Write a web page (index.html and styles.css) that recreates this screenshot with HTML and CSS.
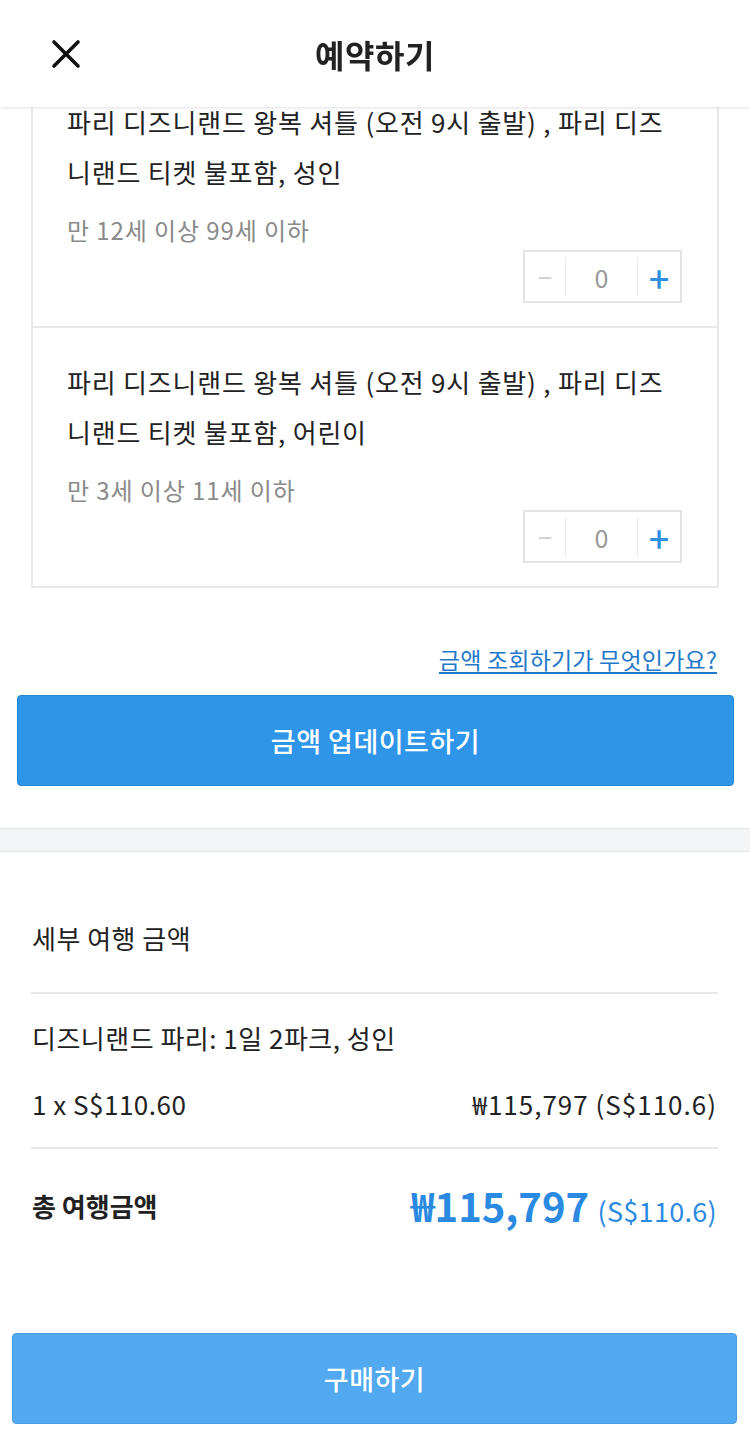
FILE: index.html
```html
<!DOCTYPE HTML>
<html>
<head>
	<meta charset="utf-8" />
	<title>예약하기</title>
	<link rel="stylesheet" href="styles.css">
</head>
<body>

<div id="header">
	<span class="close">
		<svg width="30" height="30" viewBox="0 0 30 30"><path d="M3 3 L27 27 M27 3 L3 27" stroke="#111" stroke-width="3.6" stroke-linecap="round" fill="none"/></svg>
	</span>
	<h1>예약하기</h1>
</div>

<div id="main">

<div class="options">
	<div class="option">
		<p class="opt-title">파리 디즈니랜드 왕복 셔틀 (오전 9시 출발) , 파리 디즈니랜드 티켓 불포함, 성인</p>
		<p class="opt-age">만 12세 이상 99세 이하</p>
		<div class="stepper">
			<span class="minus">−</span>
			<span class="count">0</span>
			<span class="plus">+</span>
		</div>
	</div>
	<div class="option">
		<p class="opt-title">파리 디즈니랜드 왕복 셔틀 (오전 9시 출발) , 파리 디즈니랜드 티켓 불포함, 어린이</p>
		<p class="opt-age">만 3세 이상 11세 이하</p>
		<div class="stepper">
			<span class="minus">−</span>
			<span class="count">0</span>
			<span class="plus">+</span>
		</div>
	</div>
</div>

<div class="help"><a href="#">금액 조회하기가 무엇인가요?</a></div>

<button class="btn update">금액 업데이트하기</button>

</div>

<div class="band"></div>

<div id="summary">
	<p class="sum-title">세부 여행 금액</p>
	<div class="sum-detail">
		<p class="sum-name">디즈니랜드 파리: 1일 2파크, 성인</p>
		<div class="sum-row">
			<span>1 x S$110.60</span>
			<span>₩115,797 (S$110.6)</span>
		</div>
	</div>
	<div class="sum-total">
		<span class="total-label">총 여행금액</span>
		<span class="total-price"><b>₩115,797</b> (S$110.6)</span>
	</div>
</div>

<div id="footer">
	<button class="btn buy">구매하기</button>
</div>

</body>
</html>
```

FILE: styles.css
```css
body {
	margin: 0;
	background: #fff;
	color: #222;
	font-family: "Noto Sans CJK KR", sans-serif;
}

p {margin: 0;}

#header {
	position: fixed;
	top: 0;
	left: 0;
	right: 0;
	height: 107px;
	background: #fff;
	box-shadow: 0 1px 3px rgba(0,0,0,0.12);
	display: flex;
	align-items: center;
	justify-content: center;
	z-index: 2;
}

#header h1 {
	margin: 0;
	font-size: 32px;
	font-weight: 700;
	letter-spacing: 0.5px;
}

.close {
	position: absolute;
	left: 51px;
	top: 39px;
	width: 30px;
	height: 30px;
}

#main {
	padding: 66px 16px 0 17px;
}

.options {
	margin: 0 15px 0 14px;
	border: 2px solid #e6e8ea;
}

.option {
	padding: 29px 35px 23px 34px;
	border-top: 2px solid #e6e8ea;
	display: flex;
	flex-direction: column;
}

.option:first-child {border-top: 0;}

.opt-title {
	font-size: 26px;
	line-height: 50px;
	letter-spacing: 0.8px;
}

.opt-age {
	margin-top: 16px;
	font-size: 24px;
	line-height: 34px;
	letter-spacing: 0.9px;
	color: #8a8a8a;
}

.stepper {
	align-self: flex-end;
	margin-top: 3px;
	width: 159px;
	height: 53px;
	box-sizing: border-box;
	border: 2px solid #e4e4e4;
	display: flex;
	align-items: center;
}

.stepper span {
	display: flex;
	align-items: center;
	justify-content: center;
	height: 38px;
}

.minus {
	width: 40px;
	color: #d0d0d0;
	font-size: 26px;
	border-right: 1.5px solid #eaeaea;
}

.count {
	flex: 1;
	color: #999;
	font-size: 25px;
	border-right: 1.5px solid #eaeaea;
}

.plus {
	width: 42px;
	color: #2f8fe0;
	font-size: 36px;
	font-weight: 500;
}

.help {
	text-align: right;
	margin: 56px 17px 0 0;
	font-size: 23px;
	line-height: 30px;
	letter-spacing: 0.2px;
}

.help a {
	color: #1f78c9;
	text-decoration: underline;
	text-underline-offset: 3px;
}

.btn {
	display: block;
	width: 100%;
	height: 91px;
	border-radius: 4px;
	color: #fff;
	font-family: "Noto Sans CJK KR", sans-serif;
	font-size: 27px;
	font-weight: 500;
	letter-spacing: 0.5px;
	cursor: pointer;
}

.update {
	margin-top: 21px;
	background: #2e95e9;
	border: 1px solid #2785d4;
}

.band {
	margin-top: 42px;
	height: 22px;
	background: #f4f5f7;
	border-top: 1px solid #e3e5e8;
	border-bottom: 1px solid #e3e5e8;
}

#summary {
	padding: 0 32px 0 31px;
	letter-spacing: 0.5px;
}

.sum-title {
	padding: 66px 1px 0;
	height: 74px;
	font-size: 26px;
	line-height: 40px;
	border-bottom: 2px solid #e6e8ea;
}

.sum-detail {
	padding: 24px 1px 23px;
	border-bottom: 2px solid #e6e8ea;
}

.sum-name {
	font-size: 26px;
	line-height: 40px;
}

.sum-row {
	margin-top: 26px;
	display: flex;
	justify-content: space-between;
	font-size: 26px;
	line-height: 40px;
}

.sum-row span:last-child {letter-spacing: 1px;}

.sum-total {
	padding: 27px 1px 0;
	display: flex;
	justify-content: space-between;
	align-items: center;
}

.total-label {
	font-size: 26px;
	font-weight: 700;
	letter-spacing: 0;
}

.total-price {
	color: #2a8ae2;
	font-size: 27px;
	letter-spacing: 0.3px;
}

.total-price b {
	font-size: 40px;
	font-weight: 700;
	letter-spacing: 0;
	margin-right: 2px;
}

#footer {
	padding: 99px 13px 0 12px;
}

.buy {
	background: #52a9f0;
	border: 1px solid #4a9de0;
}
```
